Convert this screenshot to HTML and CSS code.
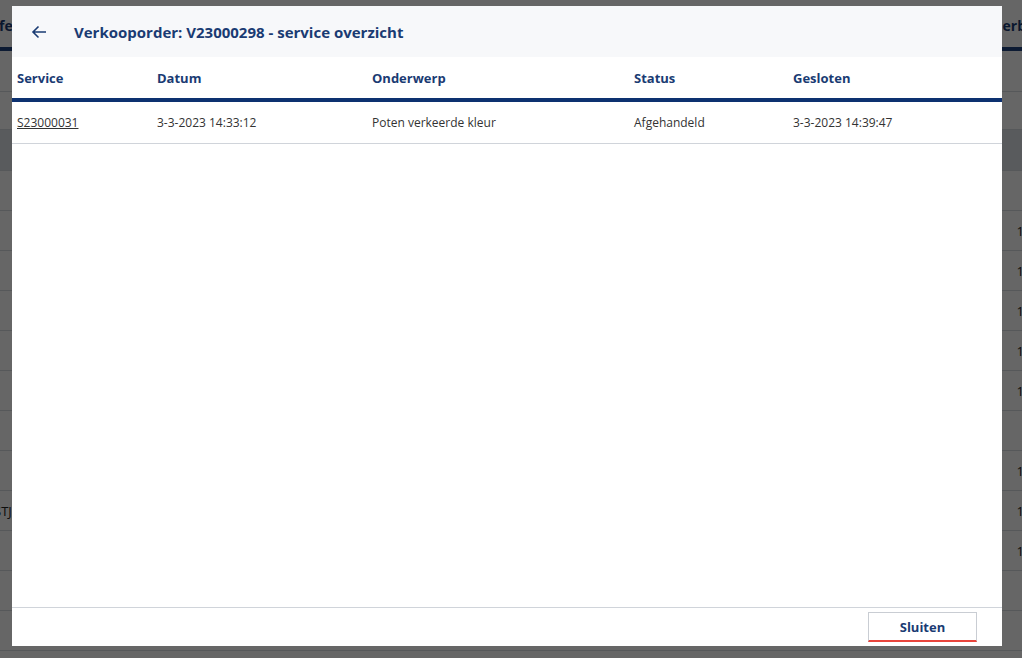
FILE: index.html
```html
<!DOCTYPE html>
<html lang="nl">
<head>
<meta charset="utf-8">
<title>Verkooporder service overzicht</title>
<link rel="stylesheet" href="styles.css">
</head>
<body>
<div class="page">
  <div class="page-head">
    <span class="ph-left">fe</span>
    <span class="ph-right">erb</span>
  </div>
  <div class="page-bar"></div>
  <div class="page-row tall"></div>
  <div class="page-row short"></div>
  <div class="page-thead"></div>
  <div class="page-row"><span></span><span class="num"></span></div>
  <div class="page-row"><span></span><span class="num">1</span></div>
  <div class="page-row"><span></span><span class="num">1</span></div>
  <div class="page-row"><span></span><span class="num">1</span></div>
  <div class="page-row"><span></span><span class="num">1</span></div>
  <div class="page-row"><span></span><span class="num">1</span></div>
  <div class="page-row"><span></span><span class="num"></span></div>
  <div class="page-row"><span></span><span class="num">1</span></div>
  <div class="page-row"><span>STJ</span><span class="num">1</span></div>
  <div class="page-row"><span></span><span class="num">1</span></div>
  <div class="page-row"><span></span><span class="num"></span></div>
  <div class="page-row"><span></span><span class="num"></span></div>
</div>
<div class="overlay"></div>
<div class="modal">
  <div class="modal-head">
    <button class="back" aria-label="Terug">
      <svg width="16" height="14" viewBox="0 0 16 14"><path d="M15 7H2M7.5 1.5L2 7l5.5 5.5" fill="none" stroke="#1a3b73" stroke-width="1.6"/></svg>
    </button>
    <h1 class="title">Verkooporder: V23000298 - service overzicht</h1>
  </div>
  <div class="modal-body">
    <table class="grid">
      <thead>
        <tr>
          <th class="c1">Service</th>
          <th class="c2">Datum</th>
          <th class="c3">Onderwerp</th>
          <th class="c4">Status</th>
          <th class="c5">Gesloten</th>
        </tr>
      </thead>
      <tbody>
        <tr>
          <td><a href="#" class="link">S23000031</a></td>
          <td>3-3-2023 14:33:12</td>
          <td>Poten verkeerde kleur</td>
          <td>Afgehandeld</td>
          <td>3-3-2023 14:39:47</td>
        </tr>
      </tbody>
    </table>
  </div>
  <div class="modal-foot">
    <button class="btn">Sluiten</button>
  </div>
</div>
</body>
</html>
```
FILE: styles.css
```css
* { box-sizing: border-box; }
html, body { margin: 0; padding: 0; }
body {
  width: 1022px;
  height: 658px;
  overflow: hidden;
  font-family: "Open Sans", "Noto Sans", sans-serif;
  background: #ffffff;
  position: relative;
}
.page { width: 1022px; }
.page-head {
  height: 47px;
  display: flex;
  justify-content: space-between;
  align-items: center;
  font-weight: 700;
  font-size: 14px;
  color: #1a3b73;
  padding-top: 3px;
}
.ph-left { margin-left: -1px; }
.ph-right { margin-right: -4px; }
.page-bar { height: 4px; background: #21447f; }
.page-row {
  height: 40px;
  border-bottom: 1px solid #d8dce2;
  display: flex;
  justify-content: space-between;
  align-items: center;
  font-size: 13px;
  color: #222;
}
.page-row span:first-child { margin-left: -6px; }
.page-row .num { margin-right: -2px; }
.page-row.tall { height: 41px; }
.page-row.short { height: 38px; }
.page-thead { height: 41px; background: #dfe3e8; border-bottom: 1px solid #d8dce2; }
.overlay {
  position: absolute;
  inset: 0;
  background: rgba(0, 0, 0, 0.6);
}
.modal {
  position: absolute;
  left: 12px;
  top: 6px;
  width: 990px;
  height: 640px;
  background: #ffffff;
  display: flex;
  flex-direction: column;
}
.modal-head {
  height: 51px;
  flex: none;
  background: #f7f8fa;
  display: flex;
  align-items: center;
  padding-left: 18px;
}
.back {
  border: 0;
  background: none;
  padding: 0;
  width: 17px;
  height: 20px;
  display: flex;
  align-items: center;
  justify-content: center;
  margin-right: 27px;
}
.title {
  margin: 0;
  font-size: 15px;
  font-weight: 700;
  color: #1a3b73;
}
.modal-body { flex: 1; }
.grid {
  width: 100%;
  border-collapse: collapse;
  table-layout: fixed;
}
.grid th {
  height: 43px;
  text-align: left;
  font-size: 13px;
  font-weight: 700;
  color: #1a3b73;
  padding: 0 5px;
  border-bottom: 4px solid #0d3170;
  vertical-align: middle;
}
.grid .c1 { width: 140px; }
.grid .c2 { width: 215px; }
.grid .c3 { width: 262px; }
.grid .c4 { width: 159px; }
.grid td {
  height: 43px;
  padding: 0 5px;
  font-size: 12px;
  color: #333;
  border-bottom: 1px solid #d0d4da;
  vertical-align: middle;
}
.link { color: #333; text-decoration: underline; }
.modal-foot {
  height: 39px;
  flex: none;
  border-top: 1px solid #d0d4da;
  display: flex;
  justify-content: flex-end;
  align-items: flex-start;
  padding: 4px 25px 0 0;
}
.btn {
  width: 109px;
  height: 30px;
  background: #ffffff;
  border: 1px solid #c9cdd3;
  border-bottom: 2px solid #e8453c;
  font-family: "Open Sans", "Noto Sans", sans-serif;
  font-size: 13px;
  font-weight: 700;
  color: #1a3b73;
  padding: 0;
}
```
